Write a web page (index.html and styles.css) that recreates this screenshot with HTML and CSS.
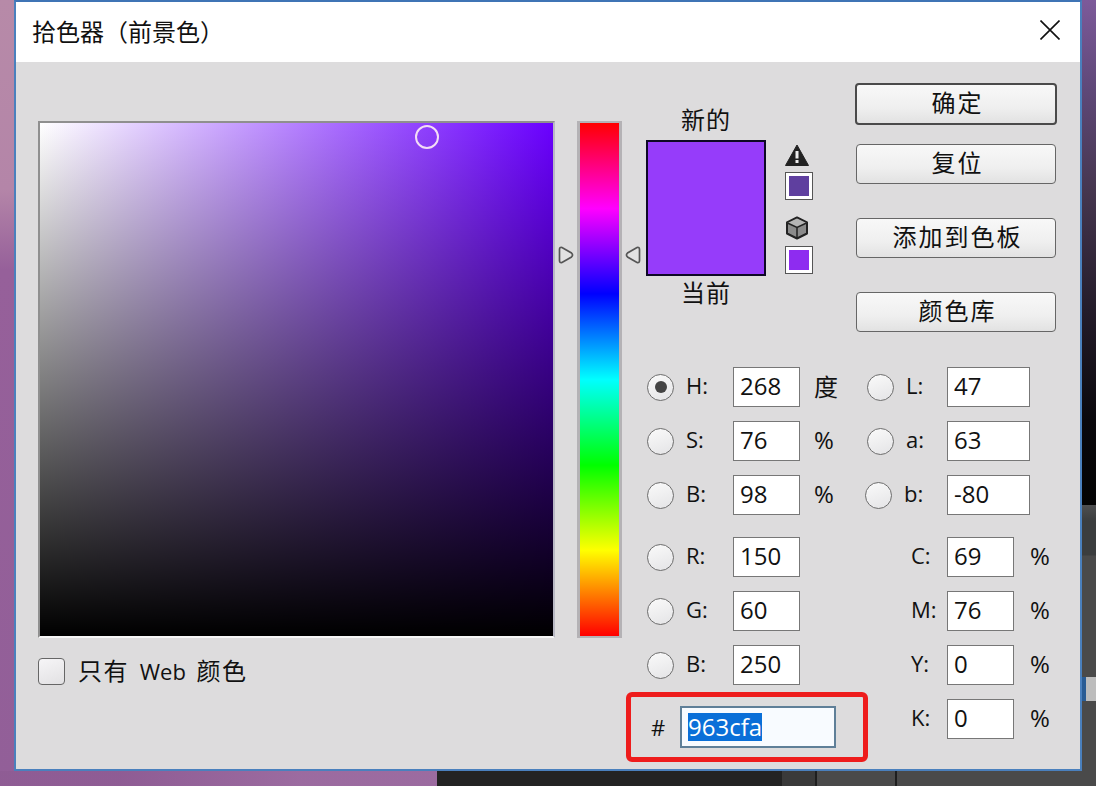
FILE: index.html
```html
<!DOCTYPE html>
<html lang="zh">
<head>
<meta charset="utf-8">
<title>拾色器（前景色）</title>
<link rel="stylesheet" href="styles.css">
</head>
<body>
<div class="desktop">
  <div class="back-right">
    <div class="br-grey"></div>
    <div class="br-tab"></div>
  </div>
  <div class="back-bottom"></div>
  <main class="dialog">
    <header class="titlebar">
      <span class="title">拾色器（前景色）</span>
      <svg class="close" width="20" height="20" viewBox="0 0 20 20"><path d="M.5 .5 19.500 19.500M19.500 .5 .5 19.500" stroke="#111" stroke-width="1.600" fill="none"/></svg>
    </header>
    <div class="body">
      <section class="picker-col">
        <div class="picker">
          <span class="picker-ring"></span>
        </div>
        <label class="web"><span class="checkbox"></span><span>只有 <span class="web-en">Web</span> 颜色</span></label>
      </section>
      <section class="hue-col">
        <svg class="arrow" width="16" height="18" viewBox="0 0 16 18"><path d="M1.500 3.500 Q1.500 .8 4 1.500 L13.500 7 Q15.500 9 13.500 11 L4 16.500 Q1.500 17.200 1.500 14.500Z" fill="#e2e2e2" stroke="#555" stroke-width="1.700"/></svg>
        <div class="hue"></div>
        <svg class="arrow" width="16" height="18" viewBox="0 0 16 18"><path d="M14.500 3.500 Q14.500 .8 12 1.500 L2.500 7 Q.5 9 2.500 11 L12 16.500 Q14.500 17.200 14.500 14.500Z" fill="#e2e2e2" stroke="#555" stroke-width="1.700"/></svg>
      </section>
      <section class="right-col">
        <div class="top-row">
          <div class="preview-col">
            <div class="preview-label">新的</div>
            <div class="preview"></div>
            <div class="preview-label current">当前</div>
          </div>
          <div class="alerts">
            <svg class="warn" width="24" height="22" viewBox="0 0 24 22"><path d="M12 1 23.500 21.500H.5Z" fill="#222" stroke="#222" stroke-linejoin="round"/><rect x="10.500" y="7" width="3" height="7.500" fill="#eee"/><rect x="10.500" y="16" width="3" height="3" fill="#eee"/></svg>
            <span class="chip chip-web"></span>
            <svg class="cube" width="24" height="24" viewBox="0 0 24 24"><path d="M12 1.500 22 6.500V17.500L12 22.500 2 17.500V6.500Z" fill="#8b8b8b" stroke="#222" stroke-width="2" stroke-linejoin="round"/><path d="M2.500 7 12 11.500 21.500 7 12 2.500Z" fill="#b5b5b5"/><path d="M2.500 7 12 11.500 21.500 7M12 11.500V22" fill="none" stroke="#222" stroke-width="1.500"/></svg>
            <span class="chip chip-gamut"></span>
          </div>
          <div class="buttons">
            <button class="btn btn-default">确定</button>
            <button class="btn btn-reset">复位</button>
            <button class="btn btn-swatch">添加到色板</button>
            <button class="btn btn-lib">颜色库</button>
          </div>
        </div>
        <div class="values">
          <div class="col-a">
            <div class="group">
              <div class="row"><span class="radio on"></span><span class="lab">H:</span><span class="inp">268</span><span class="unit cjk">度</span></div>
              <div class="row"><span class="radio"></span><span class="lab">S:</span><span class="inp">76</span><span class="unit">%</span></div>
              <div class="row"><span class="radio"></span><span class="lab">B:</span><span class="inp">98</span><span class="unit">%</span></div>
            </div>
            <div class="group">
              <div class="row"><span class="radio"></span><span class="lab">R:</span><span class="inp">150</span></div>
              <div class="row"><span class="radio"></span><span class="lab">G:</span><span class="inp">60</span></div>
              <div class="row"><span class="radio"></span><span class="lab">B:</span><span class="inp">250</span></div>
            </div>
            <div class="hex-box"><span class="hash">#</span><span class="hex-inp"><span class="sel">963cfa</span></span></div>
          </div>
          <div class="col-b">
            <div class="group">
              <div class="row"><span class="radio"></span><span class="lab lab-lab">L:</span><span class="inp wide">47</span></div>
              <div class="row"><span class="radio"></span><span class="lab lab-lab">a:</span><span class="inp wide">63</span></div>
              <div class="row shift"><span class="radio"></span><span class="lab lab-lab">b:</span><span class="inp wide">-80</span></div>
            </div>
            <div class="group">
              <div class="row cmyk"><span class="lab">C:</span><span class="inp">69</span><span class="unit">%</span></div>
              <div class="row cmyk"><span class="lab">M:</span><span class="inp">76</span><span class="unit">%</span></div>
              <div class="row cmyk"><span class="lab">Y:</span><span class="inp">0</span><span class="unit">%</span></div>
              <div class="row cmyk"><span class="lab">K:</span><span class="inp">0</span><span class="unit">%</span></div>
            </div>
          </div>
        </div>
      </section>
    </div>
  </main>
</div>
</body>
</html>
```
FILE: styles.css
```css
* { box-sizing: border-box; }
html, body { margin: 0; height: 100%; }
body {
  font-family: "Open Sans", "Noto Sans CJK SC", sans-serif;
  color: #111;
  overflow: hidden;
}
.desktop {
  position: relative;
  width: 1096px;
  height: 786px;
  overflow: hidden;
  background:
    linear-gradient(90deg, rgba(140,90,145,.55) 0, rgba(140,90,145,.55) 120px, rgba(178,135,178,.3) 300px, rgba(178,135,178,.3) 440px) 0 771px / 100% 15px no-repeat,
    linear-gradient(180deg, #b78aa8 0, #b485a8 190px, #96609a 270px, #925f98 786px);
}
.back-right {
  position: absolute;
  left: 1082px;
  top: 0;
  width: 14px;
  height: 786px;
  background: linear-gradient(180deg, #7d5a9a 0, #5f4878 90px, #46364f 190px, #241c2a 310px, #0a080c 420px, #030303 505px);
}
.br-grey {
  position: absolute;
  left: 0;
  right: 0;
  top: 505px;
  height: 281px;
  background: linear-gradient(180deg, #4e4f50 0, #3b3d3e 16px, #3b3d3e 50px, #4a4a4a 51px);
}
.br-tab {
  position: absolute;
  left: 0;
  right: 0;
  top: 677px;
  height: 24px;
  background: linear-gradient(90deg, #2a5c94 4px, #bdbdbd 4px);
}
.back-bottom {
  position: absolute;
  left: 437px;
  right: 0;
  top: 771px;
  height: 15px;
  background: linear-gradient(90deg, #232323 345px, #3a3a3a 345px, #3a3a3a 378px, #1e1e1e 378px, #1e1e1e 380px, #4a4a4a 380px, #4a4a4a 458px, #1e1e1e 458px, #1e1e1e 460px, #4a4a4a 460px);
}
.dialog {
  position: absolute;
  left: 14px;
  top: 0;
  width: 1068px;
  height: 771px;
  display: flex;
  flex-direction: column;
  border: 2px solid #4a80bd;
  border-top-color: #3f74b5;
  background: #dddcdd;
}
.titlebar {
  height: 60px;
  flex: none;
  background: #fff;
  display: flex;
  align-items: center;
  justify-content: space-between;
  padding: 0 20px 0 16px;
}
.title { font-size: 24px; line-height: 30px; }
.close { margin-bottom: 4px; }
.body {
  flex: 1;
  display: flex;
  padding: 59px 0 0 22px;
  align-items: flex-start;
}
.picker-col { width: 517px; flex: none; }
.picker {
  position: relative;
  width: 517px;
  height: 517px;
  border: 2px solid #8f8f8f;
  border-right-color: #b9b9c4;
  border-bottom-color: #f6f6f6;
  background:
    linear-gradient(180deg, rgba(0,0,0,0) 0%, #000 100%),
    linear-gradient(90deg, #fff 0%, #6a00ff 100%);
}
.picker-ring {
  position: absolute;
  left: 375px;
  top: 2px;
  width: 24px;
  height: 24px;
  border-radius: 50%;
  border: 2px solid #f3dcf6;
}
.web {
  display: flex;
  align-items: center;
  gap: 13px;
  margin-top: 18px;
  font-size: 24px;
  line-height: 30px;
  letter-spacing: 1.500px;
  word-spacing: 3px;
}
.web-en { font-size: 22px; letter-spacing: 0; }
.checkbox {
  width: 27px;
  height: 27px;
  border: 1.500px solid #666;
  border-radius: 4px;
  background: linear-gradient(160deg, #f6f5f7, #e2e1e3);
}
.hue-col {
  width: 88px;
  flex: none;
  margin-left: 3px;
  display: flex;
  align-items: flex-start;
}
.hue-col .arrow { margin-top: 125px; flex: none; }
.hue {
  width: 45px;
  height: 517px;
  flex: none;
  margin: 0 3px;
  border: solid #b4b2b5;
  border-width: 2px 3px;
  background: linear-gradient(180deg, #f00 0%, #f0f 16.7%, #00f 33.300%, #0ff 50%, #0f0 66.700%, #ff0 83.300%, #f00 100%);
}
.right-col { width: 410px; flex: none; margin-top: -37px; }
.top-row { display: flex; align-items: flex-start; height: 283px; }
.preview-col {
  width: 120px;
  flex: none;
  padding-top: 24px;
  display: flex;
  flex-direction: column;
  align-items: center;
}
.preview-label { font-size: 24px; line-height: 24px; height: 32px; letter-spacing: 1px; }
.preview-label.current { line-height: 30px; margin-top: 2px; }
.preview { width: 120px; height: 136px; border: 2px solid #0e0826; background: #963cfa; }
.alerts {
  width: 64px;
  flex: none;
  display: flex;
  flex-direction: column;
  align-items: flex-start;
  padding: 60px 0 0 19px;
}
.warn { margin-bottom: 6px; }
.cube { margin: 16px 0 6px 0; }
.chip {
  width: 28px;
  height: 28px;
  border: 1px solid #555;
  display: block;
  box-shadow: inset 0 0 0 3px #fff;
}
.chip-web { background: #5f3f9f; }
.chip-gamut { background: #8e2cf0; }
.buttons {
  width: 200px;
  flex: none;
  margin-left: 26px;
  display: flex;
  flex-direction: column;
}
.btn {
  display: block;
  width: 200px;
  height: 40px;
  padding: 0 0 3px 3px;
  font: inherit;
  font-size: 24px;
  line-height: 1;
  letter-spacing: 2px;
  color: #111;
  border: 1.500px solid #666;
  border-radius: 4px;
  background: linear-gradient(180deg, #f8f8f8 0%, #efefef 60%, #e2e2e2 100%);
}
.btn-default { width: 202px; height: 42px; margin: -1px 0 0 -1px; border: 2.500px solid #4a4a4a; }
.btn-reset { margin-top: 19px; }
.btn-swatch { margin-top: 34px; }
.btn-lib { margin-top: 34px; }
.values { display: flex; }
.col-a { width: 221px; flex: none; padding-left: 1px; }
.col-b { flex: 1; }
.group { display: flex; flex-direction: column; gap: 14px; margin-bottom: 22px; }
.row { display: flex; align-items: center; height: 40px; font-size: 22px; }
.radio {
  width: 27px;
  height: 27px;
  flex: none;
  border: 1.500px solid #6e6e6e;
  border-radius: 50%;
  background: linear-gradient(160deg, #fafafa, #e4e4e6);
  display: flex;
  align-items: center;
  justify-content: center;
}
.radio.on::after { content: ""; width: 12px; height: 12px; border-radius: 50%; background: #444; }
.lab { width: 59px; padding-left: 12px; flex: none; position: relative; top: -2px; }
.inp {
  width: 67px;
  height: 40px;
  flex: none;
  border: 1.500px solid #777;
  background: #fff;
  padding-left: 6px;
  font-size: 24px;
  line-height: 35px;
}
.inp.wide { width: 83px; }
.unit { margin: 0 0 3px 14px; font-size: 24px; }
.shift { margin-left: -2px; }
.shift .inp { margin-left: 2px; }
.lab-lab { width: 53px; }
.cmyk .lab { width: 36px; padding-left: 0; margin-left: 44px; }
.cmyk .unit { margin-left: 16px; }
.hex-box {
  width: 242px;
  height: 70px;
  margin: -15px 0 0 -21px;
  border: 5px solid #ee1c1c;
  border-radius: 6px;
  display: flex;
  align-items: center;
  padding-left: 20px;
}
.hash { width: 29px; font-size: 22px; }
.hex-inp {
  width: 156px;
  height: 42px;
  border: 2px solid #5f7f98;
  background: #f8fbff;
  padding-left: 6px;
  display: flex;
  align-items: center;
  font-size: 24px;
}
.sel { background: #0a6fd8; color: #fff; line-height: 28px; }
```
